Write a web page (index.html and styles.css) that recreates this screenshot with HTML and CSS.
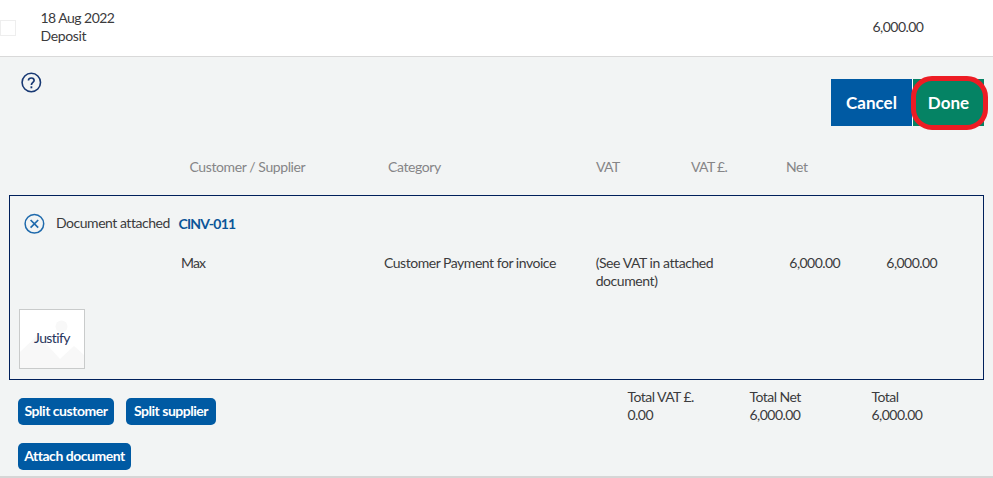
FILE: index.html
```html
<!DOCTYPE html>
<html lang="en">
<head>
<meta charset="utf-8">
<title>Deposit</title>
<link rel="stylesheet" href="styles.css">
</head>
<body>
<header class="transaction">
  <span class="checkbox"></span>
  <div class="summary"><div class="date">18 Aug 2022</div><div class="kind">Deposit</div></div>
  <span class="amount">6,000.00</span>
</header>
<main class="panel">
  <div class="toolbar">
    <svg class="help" width="22" height="22" viewBox="0 0 22 22" fill="none" stroke="#173873">
      <circle cx="11.3" cy="10.5" r="9.2" stroke-width="1.6"/>
      <path d="M8.5 8.6C8.5 6.9 9.6 6 11.3 6S14.1 7 14.1 8.5C14.1 10.4 11.4 10.4 11.4 12.9" stroke-width="1.7"/>
      <path d="M11.4 14.3v2" stroke-width="1.8"/>
    </svg>
    <div class="actions">
      <button class="action cancel">Cancel</button>
      <button class="action done">Done</button>
    </div>
  </div>
  <div class="headings">
    <span>Customer / Supplier</span><span>Category</span><span class="vat">VAT</span><span class="vat">VAT £.</span><span>Net</span>
  </div>
  <section class="document">
    <div class="attached">
      <svg class="remove" width="22" height="22" viewBox="0 0 22 22" fill="none" stroke="#1f6aac">
        <circle cx="11.4" cy="10.8" r="9.3" stroke-width="1.5"/>
        <path d="M7.6 7l7.6 7.6M15.2 7l-7.6 7.6" stroke-width="1.7"/>
      </svg>
      <span class="attached-label">Document attached</span>
      <a class="doc-link">CINV-011</a>
    </div>
    <div class="line">
      <span class="name">Max</span><span>Customer Payment for invoice</span>
      <span class="vat-note">(See VAT in attached<br>document)</span>
      <span class="money">6,000.00</span><span class="money">6,000.00</span>
    </div>
    <div class="justify">
      <svg class="placeholder" width="64" height="58" viewBox="0 0 64 58" fill="#f8f8f8"><circle cx="41.5" cy="16.5" r="6"/><path d="M0 42L18 25 40 49 54 36 64 45V58H0Z"/></svg>
      <span class="justify-label">Justify</span>
    </div>
  </section>
  <div class="footer">
    <div class="buttons">
      <button class="small b-customer">Split customer</button>
      <button class="small b-supplier">Split supplier</button>
      <button class="small b-attach">Attach document</button>
    </div>
    <div class="totals">
      <div><div class="total-label">Total VAT £.</div><div class="money">0.00</div></div>
      <div><div class="total-label">Total Net</div><div class="money">6,000.00</div></div>
      <div><div class="total-label">Total</div><div class="money">6,000.00</div></div>
    </div>
  </div>
</main>
</body>
</html>
```
FILE: styles.css
```css
* { box-sizing: border-box; }
body { margin: 0; height: 478px; overflow: hidden; background: #fff; color: #3b3b3d; font: 14px/18px Lato, sans-serif; letter-spacing: -.47px; white-space: nowrap; }
button { border: 0; padding: 0; color: #fff; font: inherit; font-weight: 700; letter-spacing: inherit; white-space: nowrap; }
.transaction { display: flex; height: 57px; border-bottom: 1px solid #d9d9d9; }
.checkbox { width: 16px; height: 16px; margin-top: 20px; border: 1px solid #eee; }
.summary { width: 832px; margin: 9px 0 0 24.5px; }
.date, .money, .amount, .total-label { letter-spacing: -.54px; }
.kind { letter-spacing: -.35px; }
.amount { margin-top: 18px; }
.panel { height: 421px; background: #f2f4f4; border-bottom: 2px solid #d6d6d6; }
.toolbar { display: flex; justify-content: space-between; height: 101px; padding: 15px 9px 0 20px; }
.actions { display: flex; gap: 1px; margin-top: 7px; background: #fff; height: 47px; }
.action { height: 47px; font-size: 17px; letter-spacing: 0; }
.cancel { width: 81px; background: #005aa3; }
.done { position: relative; width: 71px; background: #058364; }
.done::after { content: ""; position: absolute; inset: -3px -4px -4px -2px; border: 5px solid #ed1c24; border-radius: 21px; }
.headings { display: grid; grid-template-columns: 198.5px 208px 95px 95px auto; height: 37px; padding-left: 189.5px; color: #858587; letter-spacing: -.4px; }
.vat { letter-spacing: -.65px; }
.document { width: 975px; height: 185px; margin-left: 9px; border: 1px solid #00205b; }
.attached { display: flex; align-items: flex-start; padding: 17px 0 0 13px; height: 58px; }
.attached-label { width: 122.5px; margin: 1px 0 0 11px; letter-spacing: -.47px; }
.doc-link { margin-top: 2px; color: #0a5598; font-weight: 700; letter-spacing: -.78px; }
.line { display: grid; grid-template-columns: 203px 211px 194px 97px auto; height: 55px; padding-left: 171px; }
.name { letter-spacing: -.9px; }
.vat-note { padding-left: .7px; letter-spacing: -.43px; }
.line .money { padding-left: .3px; }
.justify { position: relative; width: 66px; height: 60px; margin-left: 9px; border: 1px solid #c9cbcb; background: #fff; color: #27345c; display: grid; place-items: center; letter-spacing: -.6px; }
.placeholder { position: absolute; inset: 0; }
.justify-label { position: relative; top: -1px; }
.footer { display: flex; padding: 8px 0 0 18px; }
.buttons { display: flex; flex-wrap: wrap; align-content: flex-start; gap: 18px 12px; width: 609.5px; padding: 10px 349px 0 0; }
.small { height: 27px; padding-bottom: 1px; border-radius: 5px; background: #005aa3; }
.b-customer { width: 96px; }
.b-supplier { width: 90px; }
.b-attach { width: 113px; }
.totals { display: grid; grid-template-columns: 122px 122px auto; }
```
